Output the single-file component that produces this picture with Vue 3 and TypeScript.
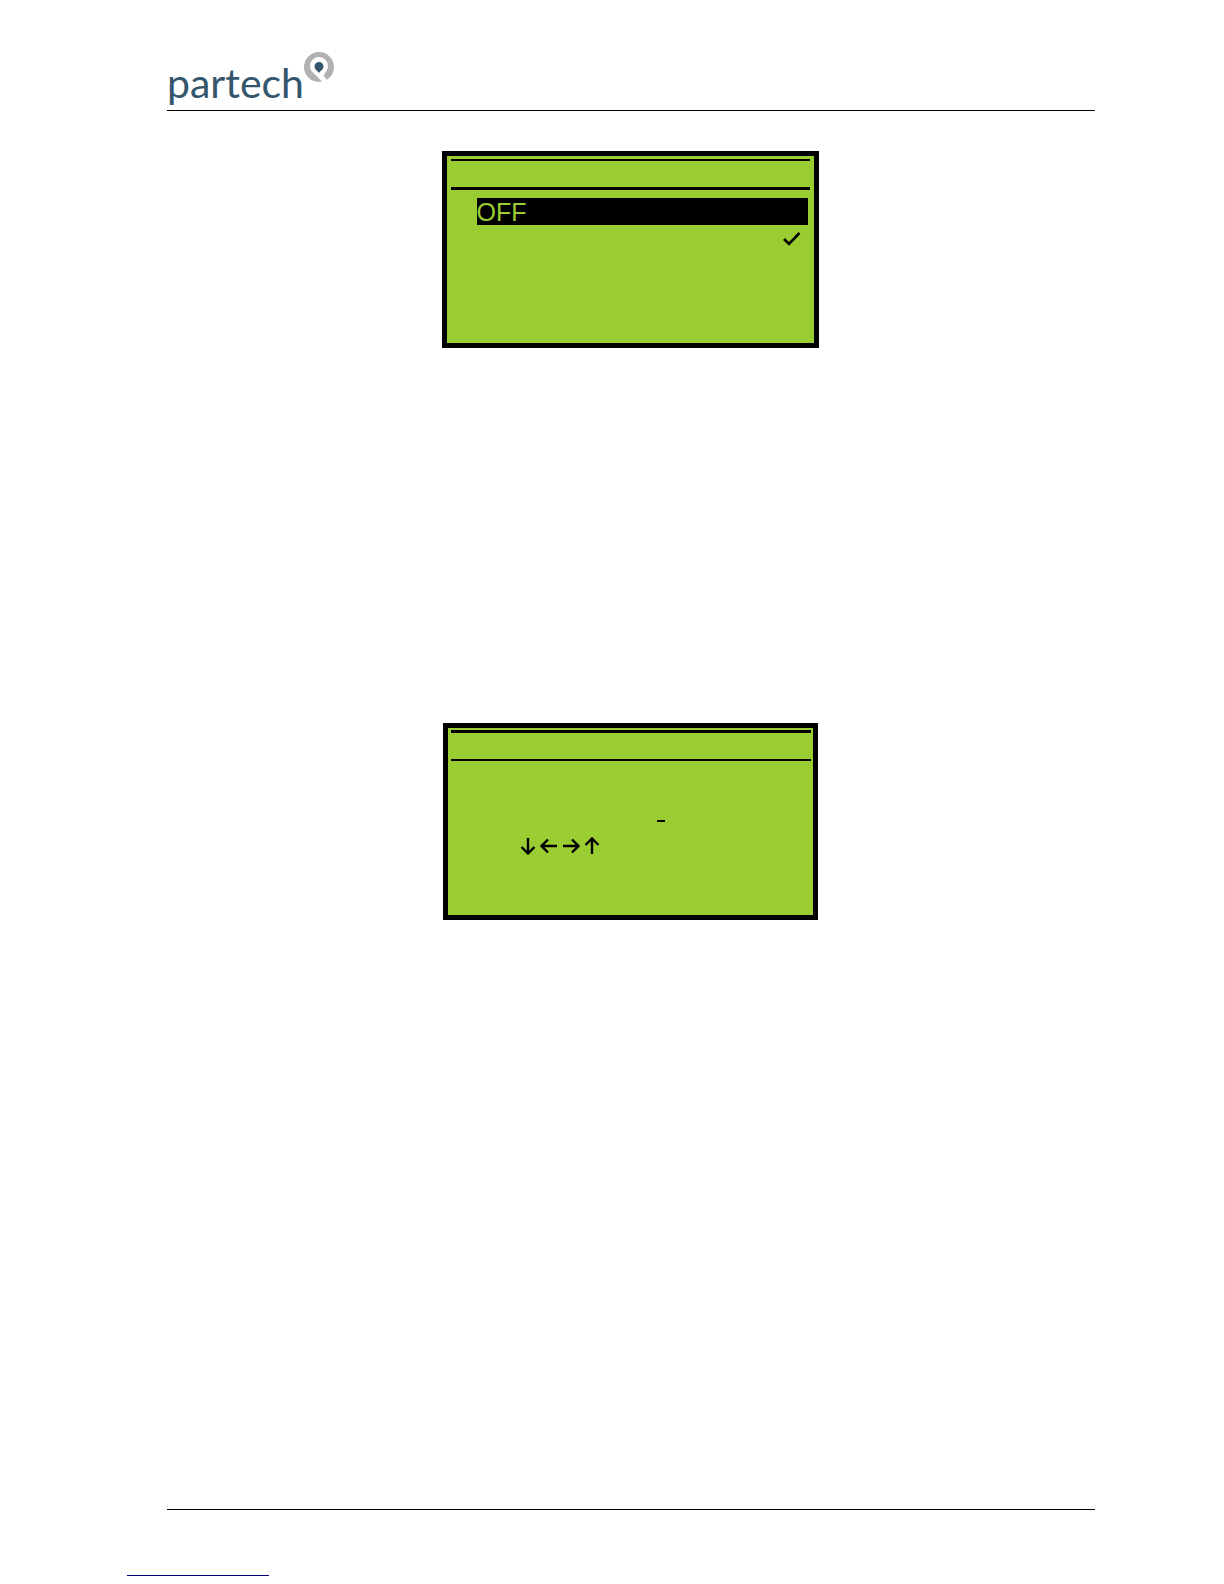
<script setup lang="ts">
interface Arrow {
  name: string
  turn: number
  width: number
}

const arrows: Arrow[] = [
  { name: 'down', turn: 90, width: 16 },
  { name: 'left', turn: 180, width: 18 },
  { name: 'right', turn: 0, width: 18 },
  { name: 'up', turn: 270, width: 16 },
]
</script>

<template>
  <div class="page">
    <header class="masthead">
      <span class="wordmark">partech</span>
      <svg class="mark" width="32" height="32" viewBox="0 0 32 32" aria-hidden="true">
        <circle cx="16" cy="16" r="15" fill="#b1b1b1" />
        <path d="M8.500 20 A9 9 0 1 1 23.500 20 L20.500 24.500 L24.500 29.500 L20.500 32 Z" fill="#fff" />
        <path d="M16 22 C14.500 19.500 11.500 18.500 11.500 15.500 A4.500 4.500 0 0 1 20.500 15.500 C20.500 18.500 17.500 19.500 16 22 Z" fill="#34566c" />
      </svg>
    </header>

    <main class="content">
      <section class="screen menu">
        <div class="title"></div>
        <div class="option selected">OFF</div>
        <div class="option checked">
          <svg width="20" height="18" viewBox="0 0 20 18" aria-label="Selected">
            <path d="M2 9 L7 14 L17.500 3" fill="none" stroke="#000" stroke-width="2.600" />
          </svg>
        </div>
      </section>

      <section class="screen entry">
        <div class="title"></div>
        <div class="cursor"></div>
        <div class="arrows">
          <svg
            v-for="arrow in arrows"
            :key="arrow.name"
            :class="arrow.name"
            :width="arrow.width"
            height="18"
            :viewBox="`${(18 - arrow.width) / 2} 0 ${arrow.width} 18`"
            :aria-label="arrow.name"
          >
            <path
              :transform="`rotate(${arrow.turn} 9 9)`"
              d="M1 9 H16 M10 2.500 L16.500 9 L10 15.500"
              fill="none"
              stroke="#000"
              stroke-width="2.400"
            />
          </svg>
        </div>
      </section>
    </main>

    <footer class="footer">
      <div class="underline"></div>
    </footer>
  </div>
</template>

<style>
body {
  margin: 0;
  background: #fff;
}
</style>

<style scoped>
.page {
  box-sizing: border-box;
  min-height: 100vh;
  padding: 51px 129px 0 167px;
  display: flex;
  flex-direction: column;
  font-family: "Liberation Sans", Arial, sans-serif;
}

.masthead {
  display: flex;
  align-items: flex-start;
  height: 59px;
  border-bottom: 1px solid #000;
}

.wordmark {
  width: 136px;
  padding-top: 8px;
  color: #34566c;
  font-family: Lato, "Open Sans", sans-serif;
  font-size: 41px;
  font-weight: 400;
  line-height: 48px;
}

.mark {
  flex: none;
}

.content {
  flex: 1;
  display: flex;
  flex-direction: column;
  align-items: center;
  padding: 40px 2px 0 0;
}

.screen {
  box-sizing: border-box;
  height: 197px;
  border: 5px solid #000;
  background: #9acd32;
}

.menu {
  width: 377px;
  padding: 3px 4px;
}

.entry {
  width: 375px;
  margin-top: 375px;
  padding: 2px 2px 2px 3px;
}

.title {
  height: 26px;
  border-top: 2px solid #000;
  border-bottom: 3px solid #000;
}

.entry .title {
  border-top-width: 3px;
  border-bottom-width: 2px;
}

.option {
  margin: 0 2px 0 26px;
  height: 27px;
  color: #9acd32;
  font-size: 25px;
  line-height: 28px;
}

.selected {
  margin-top: 8px;
  background: #000;
}

.checked {
  display: flex;
  justify-content: flex-end;
  align-items: center;
  padding-right: 6px;
}

.cursor {
  width: 8px;
  height: 2px;
  margin: 59px 0 0 206px;
  background: #000;
}

.arrows {
  display: flex;
  gap: 4px;
  margin: 15px 0 0 69px;
}

.footer {
  height: 74px;
  border-top: 1px solid #000;
}

.underline {
  width: 142px;
  height: 1px;
  margin: 65px 0 0 -40px;
  background: #00007f;
}
</style>
